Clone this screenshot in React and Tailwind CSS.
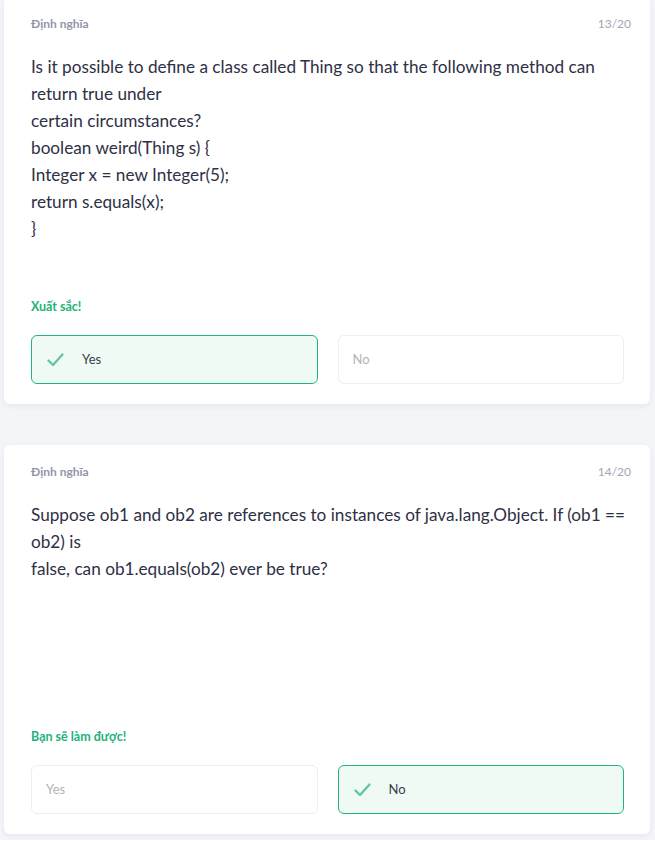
import React from 'react';

// Danh sách câu hỏi
const cauHoi = [
  {
    so: '13/20',
    noiDung: [
      'Is it possible to define a class called Thing so that the following method can return true under',
      'certain circumstances?',
      'boolean weird(Thing s) {',
      'Integer x = new Integer(5);',
      'return s.equals(x);',
      '}',
    ],
    phanHoi: 'Xuất sắc!',
    dapAn: 'Yes',
  },
  {
    so: '14/20',
    noiDung: [
      'Suppose ob1 and ob2 are references to instances of java.lang.Object. If (ob1 == ob2) is',
      'false, can ob1.equals(ob2) ever be true?',
    ],
    phanHoi: 'Bạn sẽ làm được!',
    dapAn: 'No',
  },
];

function DauTich() {
  return (
    <svg width="17" height="14" viewBox="0 0 17 14" fill="none" className="shrink-0">
      <path d="M1.5 7.5 L6 12 L15.5 1.5" stroke="#5ec596" strokeWidth="2.2" strokeLinecap="round" strokeLinejoin="round" />
    </svg>
  );
}

function LuaChon({ nhan, duocChon }) {
  if (duocChon) {
    return (
      <div className="h-[49px] rounded-[6px] border border-[#22b573] bg-[#f0faf4] flex items-center pl-[15px]">
        <DauTich />
        <span className="ml-[18px] text-[13px] text-[#3a3c4a]">{nhan}</span>
      </div>
    );
  }
  return (
    <div className="h-[49px] rounded-[6px] border border-[#eceef4] bg-white flex items-center pl-[14px]">
      <span className="text-[13px] text-[#b3b3b8]">{nhan}</span>
    </div>
  );
}

function TheCauHoi({ cau }) {
  return (
    <div className="bg-white rounded-[6px] shadow-[0_2px_6px_rgba(30,40,80,0.06)] ml-1 mr-[5px] pl-[27px] pr-[26px] pt-[19px] pb-[20px]">
      <div className="flex justify-between items-center h-4 -mr-[7px] text-[12px] leading-4">
        <span className="font-bold text-[#9296a8]">Định nghĩa</span>
        <span className="text-[#a2a6b6]">{cau.so}</span>
      </div>
      <div className="mt-[21px] -mr-[7px] min-h-[171px] text-[17.2px] leading-[27px] text-[#2e3045]">
        {cau.noiDung.map((dong, i) => (
          <div key={i}>{dong}</div>
        ))}
      </div>
      <div className="mt-[55px] h-5 leading-5 text-[12.5px] font-bold text-[#23b27a]">{cau.phanHoi}</div>
      <div className="mt-[18px] grid grid-cols-2 gap-5">
        <LuaChon nhan="Yes" duocChon={cau.dapAn === 'Yes'} />
        <LuaChon nhan="No" duocChon={cau.dapAn === 'No'} />
      </div>
    </div>
  );
}

export default function App() {
  return (
    <div className="min-h-screen bg-[#f4f5f9] font-['Lato',sans-serif] -mt-[3px] pb-[6px]">
      <div className="flex flex-col gap-[41px]">
        {cauHoi.map((cau) => (
          <TheCauHoi key={cau.so} cau={cau} />
        ))}
      </div>
    </div>
  );
}
